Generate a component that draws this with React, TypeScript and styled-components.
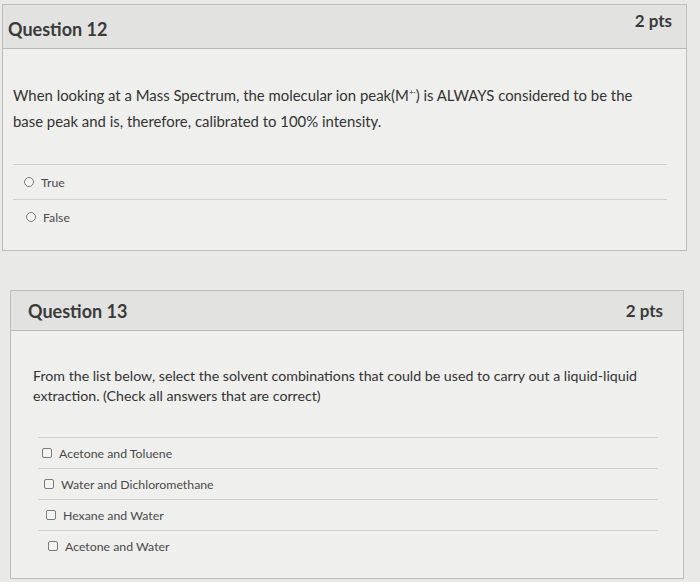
import React from "react";
import styled, { createGlobalStyle } from "styled-components";

const GlobalStyle = createGlobalStyle`
  body {
    margin: 0;
    background: #e9e9e7;
    font-family: Lato, "Open Sans", sans-serif;
    color: #333;
  }
`;

const Page = styled.div`
  display: flex;
  flex-direction: column;
  padding-top: 4px;
  width: 700px;
  height: 582px;
  overflow: hidden;
  box-sizing: border-box;
`;

const Card = styled.section<{ $left: number; $right: number; $top: number }>`
  margin: ${(p) => p.$top}px ${(p) => p.$right}px 0 ${(p) => p.$left}px;
  border: 1px solid #bdbdbb;
  background: #efefed;
`;

const Header = styled.header<{ $h: number; $padL: number; $padR: number; $padT?: number }>`
  height: ${(p) => p.$h}px;
  box-sizing: border-box;
  display: flex;
  align-items: center;
  justify-content: space-between;
  padding: ${(p) => p.$padT || 0}px ${(p) => p.$padR}px 0 ${(p) => p.$padL}px;
  background: #e2e2e0;
  border-bottom: 1px solid #b9b9b7;
`;

const Title = styled.h2`
  margin: 0;
  font-size: 18px;
  font-weight: 700;
  color: #3a3a3a;
`;

const Points = styled.span<{ $lift?: number }>`
  font-size: 17px;
  font-weight: 700;
  color: #3a3a3a;
  transform: translateY(-${(p) => p.$lift || 0}px);
`;

const Body = styled.div<{ $padL: number; $padR: number; $padT: number; $padB: number }>`
  padding: ${(p) => p.$padT}px ${(p) => p.$padR}px ${(p) => p.$padB}px ${(p) => p.$padL}px;
`;

const Prompt = styled.p<{ $size: number; $lh: number; $max: number }>`
  margin: 0;
  max-width: ${(p) => p.$max}px;
  font-size: ${(p) => p.$size}px;
  line-height: ${(p) => p.$lh}px;
  color: #333;
`;

const Sup = styled.sup`
  font-size: 8px;
  line-height: 0;
`;

const Answers = styled.div<{ $top: number; $indent: number }>`
  margin: ${(p) => p.$top}px 0 0 ${(p) => p.$indent}px;
`;

const Answer = styled.label<{ $h: number; $padL: number }>`
  display: flex;
  align-items: center;
  gap: 7px;
  height: ${(p) => p.$h}px;
  padding-left: ${(p) => p.$padL}px;
  border-top: 1px solid #d0d0ce;
  font-size: 12.3px;
  color: #4a4a4a;
`;

const Radio = styled.span`
  width: 8px;
  height: 8px;
  border: 1.5px solid #7a7a7a;
  border-radius: 50%;
  background: #f4f4f2;
`;

const Checkbox = styled.span`
  width: 8px;
  height: 8px;
  border: 1.5px solid #7a7a7a;
  border-radius: 2px;
  background: #f4f4f2;
`;

const App = () => (
  <>
    <GlobalStyle />
    <Page>
      <Card $left={2} $right={13} $top={0}>
        <Header $h={44} $padL={5} $padR={14} $padT={4}>
          <Title>Question 12</Title>
          <Points $lift={8}>2 pts</Points>
        </Header>
        <Body $padL={10} $padR={19} $padT={33} $padB={16}>
          <Prompt $size={14.9} $lh={26} $max={640}>
            When looking at a Mass Spectrum, the molecular ion peak(M<Sup>+·</Sup>) is ALWAYS considered to be the
            base peak and is, therefore, calibrated to 100% intensity.
          </Prompt>
          <Answers $top={30} $indent={0}>
            <Answer $h={34} $padL={11}>
              <Radio />
              True
            </Answer>
            <Answer $h={34} $padL={13}>
              <Radio />
              False
            </Answer>
          </Answers>
        </Body>
      </Card>

      <Card $left={10} $right={16} $top={39}>
        <Header $h={40} $padL={17} $padR={20}>
          <Title>Question 13</Title>
          <Points>2 pts</Points>
        </Header>
        <Body $padL={22} $padR={25} $padT={35} $padB={17}>
          <Prompt $size={14.2} $lh={20} $max={640}>
            From the list below, select the solvent combinations that could be used to carry out a liquid-liquid
            extraction. (Check all answers that are correct)
          </Prompt>
          <Answers $top={31} $indent={5}>
            <Answer $h={30} $padL={4}>
              <Checkbox />
              Acetone and Toluene
            </Answer>
            <Answer $h={30} $padL={6}>
              <Checkbox />
              Water and Dichloromethane
            </Answer>
            <Answer $h={30} $padL={8}>
              <Checkbox />
              Hexane and Water
            </Answer>
            <Answer $h={30} $padL={10}>
              <Checkbox />
              Acetone and Water
            </Answer>
          </Answers>
        </Body>
      </Card>
    </Page>
  </>
);

export default App;
